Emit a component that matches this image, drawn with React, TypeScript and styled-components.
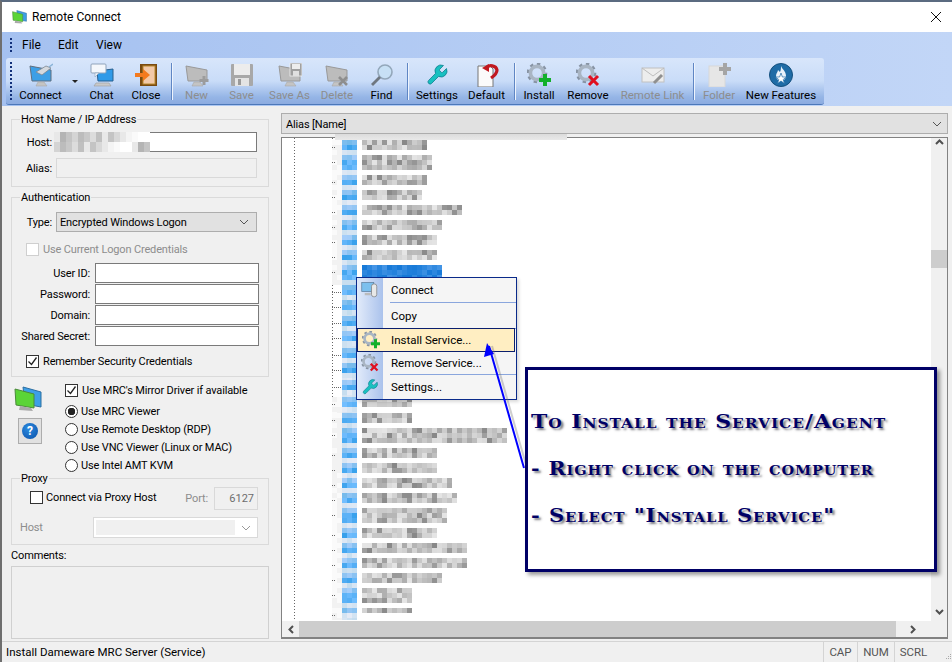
import { FC, ReactNode } from 'react'
import styled, { createGlobalStyle } from 'styled-components'

const GlobalStyle = createGlobalStyle`
  html, body {
    margin: 0;
    padding: 0;
    background: #f0f0f0;
  }
  * {
    box-sizing: border-box;
  }
`

const Win = styled.div`
  width: 952px;
  height: 662px;
  display: flex;
  flex-direction: column;
  overflow: hidden;
  background: #f0f0f0;
  border-top: 2px solid #5b6b80;
  border-left: 2px solid #6f6f6f;
  font-family: Roboto, 'Liberation Sans', sans-serif;
  font-size: 11.5px;
  color: #000;
`

const TitleBar = styled.div`
  height: 30px;
  flex: none;
  display: flex;
  align-items: center;
  background: #fff;
  padding: 0 10px 0 10px;
  gap: 5px;
  font-size: 12px;
`

const TitleText = styled.span`
  flex: 1;
`

const MenuBar = styled.div`
  height: 26px;
  flex: none;
  display: flex;
  align-items: center;
  padding: 0 0 0 8px;
  font-size: 12px;
`

const TopBand = styled.div`
  flex: none;
  background: linear-gradient(to right, #a5c1f0, #c2d6f7);
`

const Grip = styled.div<{ $h: number }>`
  width: 2px;
  height: ${({ $h }) => $h}px;
  background: repeating-linear-gradient(to bottom, #12307a 0 2px, transparent 2px 4px);
`

const MenuEntry = styled.span<{ $w: number }>`
  width: ${({ $w }) => $w}px;
`

const MenuGap = styled.span`
  width: 10px;
`

const ToolBand = styled.div`
  height: 48px;
  padding: 0 0 1px 4px;
`

const ToolStrip = styled.div`
  width: 818px;
  height: 47px;
  display: flex;
  align-items: stretch;
  padding-left: 4px;
  border-radius: 3px;
  border-bottom: 1px solid #4c78b9;
  background: linear-gradient(to bottom, #d8e6fb 0%, #c9dcf8 50%, #95b5e6 85%, #8cabe0 100%);
`

const ToolGrip = styled(Grip)`
  align-self: center;
  margin-right: 1.5px;
`

const Tool = styled.div<{ $w: number; $off?: boolean }>`
  width: ${({ $w }) => $w}px;
  flex: none;
  display: flex;
  flex-direction: column;
  align-items: center;
  padding-top: 5px;
  white-space: nowrap;
  color: ${({ $off }) => ($off ? '#8d8d8d' : '#000')};
`

const ToolLabel = styled.span`
  line-height: 16px;
`

const Caret = styled.div`
  width: 14px;
  flex: none;
  padding-top: 22px;
  display: flex;
  justify-content: center;
  &::after {
    content: '';
    width: 0;
    height: 0;
    border: 3px solid transparent;
    border-top-color: #222;
  }
`

const ToolSep = styled.div<{ $ml?: number }>`
  width: 1px;
  flex: none;
  margin: 5px 0 4px ${({ $ml }) => $ml ?? 0}px;
  background: #5f86c4;
  box-shadow: 1px 0 0 #eef4fd;
`

const Body = styled.div`
  height: 535px;
  flex: none;
  display: flex;
`

const LeftPanel = styled.div`
  width: 279px;
  flex: none;
  padding: 5px 0 0 9px;
  font-size: 11px;
  letter-spacing: -0.15px;
`

const Group = styled.fieldset<{ $h: number; $mt?: number }>`
  width: 258px;
  height: ${({ $h }) => $h}px;
  margin: ${({ $mt }) => $mt ?? 0}px 0 0 0;
  padding: 0;
  border: 1px solid #dadada;
  min-width: 0;
`

const Legend = styled.legend`
  margin-left: 8px;
  padding: 1px 1px 0;
  height: 16px;
  line-height: 15px;
`

const Row = styled.div<{ $label: number; $mt: number; $gap?: number; $h?: number }>`
  display: grid;
  grid-template-columns: ${({ $label }) => $label}px ${({ $gap }) => $gap ?? 4}px 1fr;
  align-items: center;
  margin-top: ${({ $mt }) => $mt}px;
  height: ${({ $h }) => $h ?? 20}px;
`

const RowLabel = styled.label<{ $off?: boolean }>`
  grid-column: 1;
  text-align: right;
  white-space: nowrap;
  color: ${({ $off }) => ($off ? '#8d8d8d' : '#000')};
`

const Field = styled.input<{ $off?: boolean; $w: number }>`
  grid-column: 3;
  width: ${({ $w }) => $w}px;
  height: 100%;
  border: 1px solid ${({ $off }) => ($off ? '#d9d9d9' : '#7a7a7a')};
  background: ${({ $off }) => ($off ? '#f0f0f0' : '#fff')};
  padding: 0 2px;
  outline: none;
  font: inherit;
  border-radius: 0;
`

const HostGroup = styled(Group)`
  position: relative;
`

const HostBlur = styled.svg`
  position: absolute;
  left: 42px;
  top: 5px;
`

const ComboBox = styled.div<{ $w: number }>`
  grid-column: 3;
  width: ${({ $w }) => $w}px;
  height: 100%;
  display: flex;
  align-items: center;
  justify-content: space-between;
  padding: 0 7px 0 3px;
  background: #e1e1e1;
  border: 1px solid #adadad;
`

const CheckLine = styled.div<{ $ml: number; $mt: number; $off?: boolean }>`
  display: flex;
  align-items: center;
  gap: 4px;
  height: 14px;
  margin: ${({ $mt }) => $mt}px 0 0 ${({ $ml }) => $ml}px;
  color: ${({ $off }) => ($off ? '#8d8d8d' : '#000')};
  white-space: nowrap;
`

const Box = styled.span<{ $off?: boolean }>`
  width: 13px;
  height: 13px;
  flex: none;
  display: flex;
  align-items: center;
  justify-content: center;
  background: #fff;
  border: 1px solid ${({ $off }) => ($off ? '#cfcfcf' : '#333')};
`

const CredentialRows = styled.div`
  margin-top: 7px;
`

const OptionArea = styled.div`
  height: 93px;
  display: flex;
  width: 258px;
`

const OptionIcons = styled.div`
  width: 54px;
  flex: none;
  padding: 9px 0 0 3px;
  display: flex;
  flex-direction: column;
`

const HelpButton = styled.div`
  width: 24px;
  height: 26px;
  margin: 6px 0 0 4px;
  display: flex;
  align-items: center;
  justify-content: center;
  background: #e1e1e1;
  border: 1px solid #adadad;
`

const HelpDot = styled.span`
  width: 16px;
  height: 16px;
  border-radius: 50%;
  background: radial-gradient(circle at 40% 35%, #2b8be0, #0a4fa8);
  color: #fff;
  font-weight: 700;
  font-size: 12px;
  line-height: 16px;
  text-align: center;
`

const Options = styled.div`
  flex: 1;
  padding-top: 6px;
`

const OptionCheck = styled(CheckLine)`
  margin: 0 0 5px 0;
`

const RadioLine = styled.div`
  height: 18px;
  display: flex;
  align-items: center;
  gap: 3px;
  white-space: nowrap;
`

const Radio = styled.span<{ $on?: boolean }>`
  width: 13px;
  height: 13px;
  flex: none;
  border-radius: 50%;
  border: 1px solid #333;
  background: ${({ $on }) => ($on ? 'radial-gradient(circle, #222 0 3.5px, #fff 4px)' : '#fff')};
`

const ProxyRow = styled.div`
  display: flex;
  align-items: center;
  height: 23px;
  margin-top: 1px;
`

const ProxyCheck = styled(CheckLine)`
  margin: -3px 0 0 18px;
  gap: 3px;
  flex: 1;
`

const PortLabel = styled.span`
  color: #8d8d8d;
  margin-right: 6px;
`

const PortField = styled.input`
  width: 44px;
  height: 23px;
  margin-right: 10px;
  text-align: right;
  background: #f0f0f0;
  border: 1px solid #d9d9d9;
  padding: 0 3px;
  color: #6d6d6d;
  font: inherit;
  outline: none;
  border-radius: 0;
`

const ProxyHost = styled.div`
  display: flex;
  align-items: center;
  height: 21px;
  margin: 7px 10px 0 8px;
  color: #8d8d8d;
`

const ProxyHostText = styled.span`
  width: 73px;
`

const ProxySelect = styled.div`
  flex: 1;
  height: 21px;
  display: flex;
  align-items: center;
  padding: 2px 6px 2px 2px;
  gap: 6px;
  background: #fff;
  border: 1px solid #d9d9d9;
`

const ProxySelectInner = styled.div`
  flex: 1;
  height: 100%;
  background: #f0f0f0;
`

const CommentsLabel = styled.div`
  margin-top: 3px;
  height: 16px;
  line-height: 16px;
`

const Comments = styled.div`
  width: 258px;
  height: 73px;
  margin-top: 2px;
  border: 1px solid #d0d0d0;
  background: #f0f0f0;
`

const MainPanel = styled.div`
  flex: 1;
  display: flex;
  flex-direction: column;
  padding: 7px 4px 2px 0;
`

const AliasCombo = styled.div`
  height: 21px;
  flex: none;
  display: flex;
  align-items: center;
  justify-content: space-between;
  padding: 1px 5px 0 4px;
  background: #e1e1e1;
  border: 1px solid #adadad;
  font-size: 11px;
  letter-spacing: -0.15px;
`

const TreeFrame = styled.div`
  flex: 1;
  margin-top: 3px;
  position: relative;
  display: grid;
  grid-template-columns: 1fr 16px;
  grid-template-rows: 1fr 16px;
  background: #fff;
  border: 1px solid #828282;
  border-bottom-width: 2px;
`

const TreeCap = styled.div`
  position: absolute;
  left: 53px;
  top: -4px;
  width: 232px;
  height: 6px;
  background: linear-gradient(to bottom, #dcdcdc, #e9e9e9);
`

const TreeRows = styled.div`
  overflow: hidden;
  padding-top: 2px;
  background:
    repeating-linear-gradient(to bottom, #666 0 1px, transparent 1px 3px) 12px 0 / 1px 100% no-repeat,
    repeating-linear-gradient(to bottom, #666 0 1px, transparent 1px 3px) 50px 0 / 1px 100% no-repeat;
`

const TreeRow = styled.div<{ $h: number }>`
  height: ${({ $h }) => $h}px;
  padding-left: 50px;
`

const VScroll = styled.div`
  display: flex;
  flex-direction: column;
  align-items: center;
  justify-content: space-between;
  position: relative;
  background: #f0f0f0;
  padding: 0 0 5px;
`

const VThumb = styled.div`
  position: absolute;
  top: 112px;
  left: 0;
  width: 16px;
  height: 18px;
  background: #cdcdcd;
`

const HScroll = styled.div`
  display: flex;
  align-items: center;
  background: #f0f0f0;
`

const HThumb = styled.div`
  width: 597px;
  height: 16px;
  background: #cdcdcd;
`

const ScrollEnd = styled.div<{ $w: number }>`
  width: ${({ $w }) => $w}px;
  height: 16px;
  flex: none;
  display: flex;
  align-items: center;
  justify-content: center;
`

const Corner = styled.div`
  background: #f0f0f0;
`

const Menu = styled.div`
  position: absolute;
  left: 74px;
  top: 139px;
  width: 161px;
  height: 123px;
  border: 1px solid #0a2a8a;
  background: linear-gradient(to right, #e2ebfa 0, #aac2ec 26px, #f5f5f5 26px);
  box-shadow: 2px 2px 3px rgba(0, 0, 0, 0.15);
`

const MenuItem = styled.div<{ $h: number; $active?: boolean }>`
  position: relative;
  height: ${({ $h }) => $h}px;
  display: flex;
  align-items: center;
  padding-left: ${({ $active }) => ($active ? 33 : 34)}px;
  margin: ${({ $active }) => ($active ? '0 2px 0 1px' : '0')};
  background: ${({ $active }) => ($active ? '#ffeec2' : 'transparent')};
  outline: ${({ $active }) => ($active ? '1px solid #0b1f6e' : 'none')};
`

const MenuIcon = styled.span`
  position: absolute;
  left: 4px;
  top: 50%;
  transform: translateY(-50%);
  display: flex;
`

const MenuSep = styled.div`
  height: 1px;
  margin-left: 33px;
  background: #8aa6dd;
`

const Arrow = styled.svg`
  position: absolute;
  left: 200px;
  top: 200px;
  overflow: visible;
`

const Callout = styled.div`
  position: absolute;
  left: 243px;
  top: 229px;
  width: 412px;
  height: 205px;
  padding: 28px 0 0 3px;
  background: #fff;
  border: 3px solid #000066;
  box-shadow: 3px 3px 4px rgba(0, 0, 0, 0.4);
`

const CalloutLine = styled.div<{ $stretch: number }>`
  height: 47px;
  line-height: 47px;
  color: #000066;
  font-family: 'DejaVu Serif', 'Liberation Serif', serif;
  font-weight: 700;
  font-size: 18.5px;
  font-variant: small-caps;
  letter-spacing: 0.8px;
  white-space: nowrap;
  text-shadow: 2px 2px 2px rgba(50, 50, 60, 0.65);
  transform: scaleX(${({ $stretch }) => $stretch});
  transform-origin: left center;
`

const StatusBar = styled.div`
  flex: 1;
  display: flex;
  align-items: center;
  border-top: 1px solid #d4d4d4;
  padding-left: 4px;
`

const StatusText = styled.span`
  flex: 1;
`

const StatusCell = styled.span<{ $w: number }>`
  width: ${({ $w }) => $w}px;
  height: 100%;
  display: flex;
  align-items: center;
  justify-content: center;
  border-left: 1px solid #d4d4d4;
  color: #555;
`

const Grab = styled.svg`
  align-self: flex-end;
  margin: 0 0 2px 13px;
`

const Mono: FC<{ screen: string; edge?: string }> = ({ screen, edge = '#999' }) => (
  <>
    <polygon points='1,3 22,7 22,18 3,18' fill={screen} stroke={edge} strokeWidth='1' />
    <polygon points='9,19 15,19 18,23 7,23' fill='#c4c4c4' stroke='#a8a8a8' strokeWidth='0.6' />
  </>
)

const Icon: FC<{ size?: number; children: ReactNode }> = ({ size = 24, children }) => (
  <svg width={size} height={size} viewBox='0 0 24 24'>
    {children}
  </svg>
)

const Gear: FC = () => (
  <>
    <circle cx='10' cy='10' r='9' fill='none' stroke='#8793a3' strokeWidth='2.6' strokeDasharray='3.4 3.6' />
    <circle cx='10' cy='10' r='6.6' fill='none' stroke='#a9b5c3' strokeWidth='3.6' />
  </>
)

const ConnectIcon = () => (
  <Icon>
    <Mono screen='#3d9fe6' edge='#5f6f80' />
    <polygon points='7,9 17,3 22,5 13,12' fill='#d5d9de' stroke='#7d8790' strokeWidth='0.8' />
    <line x1='20' y1='4' x2='24' y2='1' stroke='#8ab4d8' strokeWidth='1.5' />
  </Icon>
)

const ChatIcon = () => (
  <Icon>
    <polygon points='7,8 23,6 23,18 8,18' fill='#2f9ae8' stroke='#29608f' strokeWidth='1' />
    <polygon points='6,20 19,20 21,23 4,23' fill='#c9c9c9' stroke='#9a9a9a' strokeWidth='0.6' />
    <rect x='1' y='1' width='15' height='9' rx='1' fill='#f4f7fb' stroke='#8fa3bb' />
    <polygon points='5,10 9,10 5,14' fill='#f4f7fb' stroke='#8fa3bb' strokeWidth='0.6' />
  </Icon>
)

const CloseIcon = () => (
  <Icon>
    <rect x='6' y='1' width='17' height='22' fill='#7a4a10' />
    <rect x='9' y='3' width='12' height='18' fill='#f3c9a8' stroke='#b98a2e' />
    <polygon points='1,10 9,10 9,6 16,12 9,18 9,14 1,14' fill='#f47a1e' />
  </Icon>
)

const NewIcon = () => (
  <Icon>
    <Mono screen='#bcbcbc' />
    <path d='M19 13v9M14.5 17.5h9' stroke='#9c9c9c' strokeWidth='3' />
  </Icon>
)

const SaveIcon = () => (
  <Icon>
    <rect x='1' y='1' width='22' height='22' rx='1' fill='#a8a8a8' />
    <rect x='4' y='1' width='16' height='11' fill='#ececec' />
    <rect x='5' y='15' width='14' height='8' fill='#e4e4e4' />
    <rect x='8' y='16' width='3' height='6' fill='#9a9a9a' />
  </Icon>
)

const SaveAsIcon = () => (
  <Icon>
    <Mono screen='#bcbcbc' />
    <rect x='12' y='0' width='12' height='13' fill='#a0a0a0' stroke='#f0f0f0' strokeWidth='0.8' />
    <rect x='14' y='1' width='8' height='5' fill='#ededed' />
    <rect x='15' y='8' width='6' height='5' fill='#e0e0e0' />
  </Icon>
)

const DeleteIcon = () => (
  <Icon>
    <Mono screen='#bcbcbc' />
    <path d='M14 14l8 8M22 14l-8 8' stroke='#8e8e8e' strokeWidth='2.6' />
  </Icon>
)

const FindIcon = () => (
  <Icon>
    <circle cx='15' cy='9' r='7' fill='#c7e0f5' stroke='#93a7ba' strokeWidth='1.6' />
    <line x1='10' y1='14' x2='2' y2='22' stroke='#6f7780' strokeWidth='2.8' />
  </Icon>
)

const WrenchIcon: FC<{ size?: number }> = ({ size }) => (
  <Icon size={size}>
    <path
      d='M14.7 6.3a1 1 0 0 0 0 1.4l1.6 1.6a1 1 0 0 0 1.4 0l3.77-3.77a6 6 0 0 1-7.94 7.94l-6.91 6.91a2.12 2.12 0 0 1-3-3l6.91-6.91a6 6 0 0 1 7.94-7.94l-3.76 3.76z'
      fill='#18c0c0'
      stroke='#0f7f8f'
      strokeWidth='0.8'
    />
  </Icon>
)

const DefaultIcon = () => (
  <Icon>
    <path d='M3 3h12l3 3v18H3z' fill='#fbfbfb' stroke='#777' />
    <path d='M11 5a6 5 0 0 1 11 2c0 4-3 6-6 8' fill='none' stroke='#c01820' strokeWidth='3.2' />
    <polygon points='7,5 14,1 14,9' fill='#c01820' />
  </Icon>
)

const InstallIcon: FC<{ size?: number }> = ({ size }) => (
  <Icon size={size}>
    <Gear />
    <path d='M18 11v12M12 17h12' stroke='#12b02a' strokeWidth='4' />
  </Icon>
)

const RemoveIcon: FC<{ size?: number }> = ({ size }) => (
  <Icon size={size}>
    <Gear />
    <path d='M13 13l9 9M22 13l-9 9' stroke='#e01020' strokeWidth='3' />
  </Icon>
)

const LinkIcon = () => (
  <Icon>
    <rect x='1' y='5' width='22' height='14' fill='#ededed' stroke='#c0c0c0' />
    <path d='M1 5l11 8 11-8' fill='none' stroke='#bdbdbd' />
    <path d='M13 20l8-8' stroke='#909090' strokeWidth='3' />
  </Icon>
)

const FolderIcon = () => (
  <Icon>
    <rect x='2' y='3' width='16' height='21' fill='#e6e6e6' stroke='#d8d8d8' />
    <path d='M18 0v12M12 6h12' stroke='#a5a5a5' strokeWidth='4' />
  </Icon>
)

const FeaturesIcon = () => (
  <Icon>
    <circle cx='12' cy='12' r='11.5' fill='#1f6ca6' stroke='#15507e' />
    <path d='M12 3c1 3 5 5 5 10a5 5 0 0 1-10 0c0-3 2-4 2-6 1 1 2 2 2 2 1-2 1-4 1-6z' fill='#e9f2fa' />
    <polygon points='12,10 13.4,14 17.5,14 14.2,16.5 15.5,20.5 12,18 8.5,20.5 9.8,16.5 6.5,14 10.6,14' fill='#fff' stroke='#1f6ca6' strokeWidth='0.7' />
  </Icon>
)

const DuoScreens: FC<{ w: number; h: number }> = ({ w, h }) => (
  <svg width={w} height={h} viewBox='0 0 28 26'>
    <polygon points='9,1 27,6 27,21 11,18' fill='#3d9fe6' stroke='#2d6ea0' />
    <polygon points='1,3 20,8 20,22 2,19' fill='#5bd437' stroke='#4a8a3a' />
    <polygon points='6,20 17,22 19,25 5,24' fill='#aaa' />
  </svg>
)

const PlugMonitorIcon = () => (
  <Icon size={18}>
    <rect x='1' y='2' width='16' height='12' fill='#7cc0ee' stroke='#5f7f9f' />
    <rect x='5' y='16' width='8' height='3' fill='#bbb' />
    <rect x='14' y='4' width='7' height='17' rx='3' fill='#e8e8e8' stroke='#7f7f7f' />
  </Icon>
)

const Chevron: FC<{ color?: string }> = ({ color = '#555' }) => (
  <svg width='10' height='6' viewBox='0 0 10 6'>
    <path d='M1 1l4 4 4-4' fill='none' stroke={color} strokeWidth='1' />
  </svg>
)

const ScrollArrow: FC<{ dir: 'up' | 'down' | 'left' | 'right' }> = ({ dir }) => {
  const rotate = { up: 180, down: 0, left: 90, right: -90 }[dir]
  return (
    <svg width='9' height='7' viewBox='0 0 9 7' transform={`rotate(${rotate})`}>
      <path d='M1 1l3.5 3.5L8 1' fill='none' stroke='#505050' strokeWidth='2' />
    </svg>
  )
}

const Check = () => (
  <svg width='11' height='11' viewBox='0 0 11 11'>
    <path d='M1.5 5.5l3 3 5-7' fill='none' stroke='#222' strokeWidth='1.3' />
  </svg>
)

// seeded so that the mosaic looks the same on every load
const noise = (a: number, b: number) => {
  const v = Math.sin(a * 12.9898 + b * 78.233) * 43758.5453
  return v - Math.floor(v)
}

const grey = (n: number) => {
  const c = n < 0.2 ? 135 + n * 150 : 170 + (n - 0.2) * 75
  const g = Math.round(c)
  return `rgb(${g},${g},${g})`
}

const blue = (n: number, level: number) => {
  if (level === 2) return `rgb(${Math.round(55 + n * 60)},${Math.round(160 + n * 30)},${Math.round(235 + n * 20)})`
  if (level === 1) return `rgb(${Math.round(115 + n * 50)},${Math.round(185 + n * 20)},${Math.round(235 + n * 15)})`
  return `rgb(${Math.round(195 + n * 35)},${Math.round(220 + n * 15)},${Math.round(238 + n * 8)})`
}

const selectedBlue = (n: number) =>
  `rgb(${Math.round(20 + n * 50)},${Math.round(120 + n * 30)},${Math.round(215 + n * 15)})`

interface Node {
  h: number
  end: number
  selected?: boolean
  dotted?: boolean
}

const nodes: Node[] = [
  { h: 15, end: 428 }, { h: 20, end: 433 }, { h: 15, end: 428 }, { h: 15, end: 423 },
  { h: 15, end: 463 }, { h: 15, end: 443 }, { h: 15, end: 438 }, { h: 15, end: 438 },
  { h: 20, end: 443, selected: true }, { h: 15, end: 420, dotted: true }, { h: 16, end: 420, dotted: true },
  { h: 15, end: 420, dotted: true }, { h: 17, end: 420, dotted: true }, { h: 15, end: 420, dotted: true },
  { h: 17, end: 420, dotted: true }, { h: 17, end: 420, dotted: true },
  { h: 16, end: 413 }, { h: 15, end: 413 }, { h: 20, end: 508 }, { h: 15, end: 438 },
  { h: 15, end: 438 }, { h: 15, end: 453 }, { h: 15, end: 458 }, { h: 20, end: 448 },
  { h: 15, end: 438 }, { h: 15, end: 468 }, { h: 15, end: 468 }, { h: 15, end: 443 },
  { h: 20, end: 413 }, { h: 12, end: 413 },
]

const NodeMosaic: FC<{ node: Node; index: number }> = ({ node, index }) => {
  const textRows = Math.max(1, Math.floor(node.h / 5) - 1)
  const cells: ReactNode[] = []
  const textCols = Math.floor((node.end - 363) / 5)
  const iconRows = Math.floor(node.h / 5)
  for (let r = 0; r < Math.ceil(node.h / 5); r++) {
    const level = r >= iconRows - 1 ? 0 : r === 0 ? 1 : 2
    if (!node.dotted) {
      for (let c = 0; c < 2; c++) {
        cells.push(<rect key={`p${r}${c}`} x={c * 5} y={r * 5} width='5' height='5' fill={noise(index + r, c) > 0.5 ? '#f2f2f2' : '#fafafa'} />)
      }
    }
    for (let c = 0; c < 3; c++) {
      cells.push(<rect key={`i${r}${c}`} x={10 + c * 5} y={r * 5} width='5' height='5' fill={blue(noise(index * 3 + r, c + 1), level)} />)
    }
    if (r < textRows) {
      for (let c = 0; c < textCols; c++) {
        const n = noise(index + r * 7 + 1, c + 3)
        cells.push(<rect key={`t${r}${c}`} x={30 + c * 5} y={r * 5} width='5' height='5' fill={node.selected ? selectedBlue(n) : grey(n)} />)
      }
    }
  }
  const dots = node.dotted ? [0, 2, 4, 6, 8] : [0, 2]
  return (
    <svg width={node.end - 333} height={node.h} shapeRendering='crispEdges'>
      {cells}
      {dots.map((x) => (
        <rect key={x} x={x} y='7' width='1' height='1' fill='#666' />
      ))}
    </svg>
  )
}

const tools = {
  first: [
    { label: 'Chat', w: 40, icon: <ChatIcon /> },
    { label: 'Close', w: 49, icon: <CloseIcon /> },
  ],
  edit: [
    { label: 'New', w: 50, icon: <NewIcon />, off: true },
    { label: 'Save', w: 40, icon: <SaveIcon />, off: true },
    { label: 'Save As', w: 56, icon: <SaveAsIcon />, off: true },
    { label: 'Delete', w: 39, icon: <DeleteIcon />, off: true },
    { label: 'Find', w: 50, icon: <FindIcon /> },
  ],
  prefs: [
    { label: 'Settings', w: 59, icon: <WrenchIcon /> },
    { label: 'Default', w: 40, icon: <DefaultIcon /> },
  ],
  service: [
    { label: 'Install', w: 49, icon: <InstallIcon /> },
    { label: 'Remove', w: 49, icon: <RemoveIcon /> },
    { label: 'Remote Link', w: 80, icon: <LinkIcon />, off: true },
  ],
  last: [
    { label: 'Folder', w: 51, icon: <FolderIcon />, off: true },
    { label: 'New Features', w: 73, icon: <FeaturesIcon /> },
  ],
}

const ToolGroup: FC<{ items: { label: string; w: number; icon: ReactNode; off?: boolean }[] }> = ({ items }) => (
  <>
    {items.map((t) => (
      <Tool key={t.label} $w={t.w} $off={t.off}>
        {t.icon}
        <ToolLabel>{t.label}</ToolLabel>
      </Tool>
    ))}
  </>
)

const credentialFields = ['User ID:', 'Password:', 'Domain:', 'Shared Secret:']
const viewers = ['Use MRC Viewer', 'Use Remote Desktop (RDP)', 'Use VNC Viewer (Linux or MAC)', 'Use Intel AMT KVM']
const hostBlur = [
  '#e8e8e8', '#b4b4b4', '#c4c4c4', '#d4d4d4', '#bcbcbc', '#c8c8c8', '#dcdcdc', '#c0c0c0',
  '#e8e8e8', '#c4c4c4', '#d8d8d8', '#e8e8e8', '#f4f4f4', '#fafafa', '#ffffff', '#ffffff',
]

export default function App() {
  return (
    <>
      <GlobalStyle />
      <Win>
        <TitleBar>
          <DuoScreens w={15} h={14} />
          <TitleText>Remote Connect</TitleText>
          <svg width='12' height='12' viewBox='0 0 12 12'>
            <path d='M1 1l10 10M11 1L1 11' stroke='#111' strokeWidth='1' />
          </svg>
        </TitleBar>
        <TopBand>
          <MenuBar>
            <Grip $h={15} />
            <MenuGap />
            <MenuEntry $w={36}>File</MenuEntry>
            <MenuEntry $w={38}>Edit</MenuEntry>
            <MenuEntry $w={40}>View</MenuEntry>
          </MenuBar>
          <ToolBand>
            <ToolStrip>
              <ToolGrip $h={38} />
              <Tool $w={54}>
                <ConnectIcon />
                <ToolLabel>Connect</ToolLabel>
              </Tool>
              <Caret />
              <ToolGroup items={tools.first} />
              <ToolSep />
              <ToolGroup items={tools.edit} />
              <ToolSep />
              <ToolGroup items={tools.prefs} />
              <ToolSep $ml={7} />
              <ToolGroup items={tools.service} />
              <ToolSep />
              <ToolGroup items={tools.last} />
            </ToolStrip>
          </ToolBand>
        </TopBand>
        <Body>
          <LeftPanel>
            <HostGroup $h={76}>
              <Legend>Host Name / IP Address</Legend>
              <Row $label={40} $mt={5}>
                <RowLabel>Host:</RowLabel>
                <Field $w={201} readOnly />
              </Row>
              <Row $label={40} $mt={6}>
                <RowLabel>Alias:</RowLabel>
                <Field $w={201} $off readOnly />
              </Row>
              <HostBlur width='98' height='20' shapeRendering='crispEdges'>
                {hostBlur.map((fill, i) => (
                  <g key={i}>
                    <rect x={i * 6} y='0' width='6' height='10' fill={fill} />
                    <rect x={i * 6} y='10' width='6' height='10' fill={hostBlur[(i + 3) % hostBlur.length]} />
                  </g>
                ))}
              </HostBlur>
            </HostGroup>
            <Group $h={188} $mt={2}>
              <Legend>Authentication</Legend>
              <Row $label={40} $mt={7}>
                <RowLabel>Type:</RowLabel>
                <ComboBox $w={201}>
                  Encrypted Windows Logon
                  <Chevron />
                </ComboBox>
              </Row>
              <CheckLine $ml={14} $mt={10} $off>
                <Box $off />
                Use Current Logon Credentials
              </CheckLine>
              <CredentialRows>
                {credentialFields.map((label) => (
                  <Row key={label} $label={78} $gap={5} $mt={1}>
                    <RowLabel>{label}</RowLabel>
                    <Field $w={164} readOnly />
                  </Row>
                ))}
              </CredentialRows>
              <CheckLine $ml={14} $mt={8}>
                <Box>
                  <Check />
                </Box>
                Remember Security Credentials
              </CheckLine>
            </Group>
            <OptionArea>
              <OptionIcons>
                <DuoScreens w={28} h={26} />
                <HelpButton>
                  <HelpDot>?</HelpDot>
                </HelpButton>
              </OptionIcons>
              <Options>
                <OptionCheck $ml={0} $mt={0}>
                  <Box>
                    <Check />
                  </Box>
                  Use MRC's Mirror Driver if available
                </OptionCheck>
                {viewers.map((label, i) => (
                  <RadioLine key={label}>
                    <Radio $on={i === 0} />
                    {label}
                  </RadioLine>
                ))}
              </Options>
            </OptionArea>
            <Group $h={75}>
              <Legend>Proxy</Legend>
              <ProxyRow>
                <ProxyCheck $ml={18} $mt={0}>
                  <Box />
                  Connect via Proxy Host
                </ProxyCheck>
                <PortLabel>Port:</PortLabel>
                <PortField value='6127' readOnly />
              </ProxyRow>
              <ProxyHost>
                <ProxyHostText>Host</ProxyHostText>
                <ProxySelect>
                  <ProxySelectInner />
                  <Chevron color='#999' />
                </ProxySelect>
              </ProxyHost>
            </Group>
            <CommentsLabel>Comments:</CommentsLabel>
            <Comments />
          </LeftPanel>
          <MainPanel>
            <AliasCombo>
              Alias [Name]
              <Chevron />
            </AliasCombo>
            <TreeFrame>
              <TreeRows>
                {nodes.map((node, i) => (
                  <TreeRow key={i} $h={node.h}>
                    <NodeMosaic node={node} index={i} />
                  </TreeRow>
                ))}
              </TreeRows>
              <VScroll>
                <ScrollArrow dir='up' />
                <VThumb />
                <ScrollArrow dir='down' />
              </VScroll>
              <HScroll>
                <ScrollEnd $w={17}>
                  <ScrollArrow dir='left' />
                </ScrollEnd>
                <HThumb />
                <ScrollEnd $w={34}>
                  <ScrollArrow dir='right' />
                </ScrollEnd>
              </HScroll>
              <Corner />
              <TreeCap />
              <Menu>
                <MenuItem $h={24}>
                  <MenuIcon>
                    <PlugMonitorIcon />
                  </MenuIcon>
                  Connect
                </MenuItem>
                <MenuSep />
                <MenuItem $h={25}>Copy</MenuItem>
                <MenuSep />
                <MenuItem $h={22} $active>
                  <MenuIcon>
                    <InstallIcon size={18} />
                  </MenuIcon>
                  Install Service...
                </MenuItem>
                <MenuItem $h={23}>
                  <MenuIcon>
                    <RemoveIcon size={18} />
                  </MenuIcon>
                  Remove Service...
                </MenuItem>
                <MenuSep />
                <MenuItem $h={23}>
                  <MenuIcon>
                    <WrenchIcon size={18} />
                  </MenuIcon>
                  Settings...
                </MenuItem>
              </Menu>
              <Arrow width='45' height='130'>
                <line x1='45' y1='130' x2='10' y2='8' stroke='#777' strokeWidth='2' opacity='0.35' />
                <line x1='42' y1='130' x2='7' y2='8' stroke='#0000ff' strokeWidth='2' />
                <polygon points='5,5 2,19 12,16' fill='#0000ff' />
              </Arrow>
              <Callout>
                <CalloutLine $stretch={1.185}>To Install the Service/Agent</CalloutLine>
                <CalloutLine $stretch={1.115}>- Right click on the computer</CalloutLine>
                <CalloutLine $stretch={1.14}>- Select "Install Service"</CalloutLine>
              </Callout>
            </TreeFrame>
          </MainPanel>
        </Body>
        <StatusBar>
          <StatusText>Install Dameware MRC Server (Service)</StatusText>
          <StatusCell $w={34}>CAP</StatusCell>
          <StatusCell $w={37}>NUM</StatusCell>
          <StatusCell $w={38}>SCRL</StatusCell>
          <Grab width='7' height='7' viewBox='0 0 7 7'>
            <path d='M5 1h1v1H5zM3 3h1v1H3zM5 3h1v1H5zM1 5h1v1H1zM3 5h1v1H3zM5 5h1v1H5z' fill='#aaa' />
          </Grab>
        </StatusBar>
      </Win>
    </>
  )
}
